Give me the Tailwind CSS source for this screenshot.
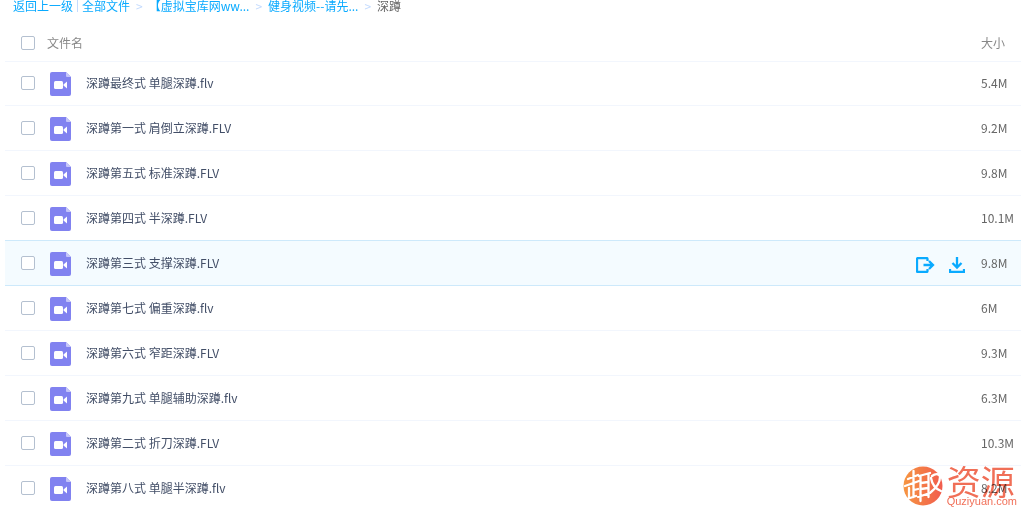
<!DOCTYPE html>
<html lang="zh-CN">
<head>
  <meta charset="UTF-8" />
  <meta name="viewport" content="width=device-width, initial-scale=1.0"/>
  <title>深蹲</title>
  <script src="https://cdn.jsdelivr.net/npm/@tailwindcss/browser@4"></script>
</head>
<body class="bg-white font-['Noto_Sans_CJK_SC',sans-serif] text-xs text-[#424e67]">
  <div class="relative h-screen overflow-hidden">
    <nav class="flex h-3 items-center pl-[13px] leading-3 text-[#09aaff] whitespace-nowrap">
      <a href="#">返回上一级</a>
      <span class="mx-1 h-3 w-px bg-[#c4dbfe]"></span>
      <a href="#">全部文件</a>
      <span class="mx-1.5 text-[#c4dbfe]">&gt;</span>
      <a href="#">【虚拟宝库网ww...</a>
      <span class="mx-1.5 text-[#c4dbfe]">&gt;</span>
      <a href="#">健身视频--请先...</a>
      <span class="mx-1.5 text-[#c4dbfe]">&gt;</span>
      <span class="text-[#666]">深蹲</span>
    </nav>

    <div class="mt-3 pl-[5px]">
      <table class="w-full table-fixed border-collapse">
        <thead>
          <tr class="h-[37px] border-b border-[#f2f6fd] text-left text-[#888]">
            <th class="w-[42px] pt-0.5 pl-4">
              <input type="checkbox" aria-label="全选" class="block size-3.5 appearance-none rounded-xs border border-[#b4c0d0] bg-white" />
            </th>
            <th class="pt-0.5 font-normal">文件名</th>
            <th class="w-[66px]"></th>
            <th class="w-10 pt-0.5 font-normal">大小</th>
          </tr>
        </thead>
        <tbody id="fileList"></tbody>
      </table>
    </div>

    <div class="pointer-events-none absolute right-1 bottom-0.5 flex items-center gap-1 opacity-90 mix-blend-multiply">
      <svg class="size-10" viewBox="0 0 40 40">
        <defs>
          <linearGradient id="badge" x1="0" y1="0" x2="1" y2="0">
            <stop offset="0" stop-color="#f58a2c" />
            <stop offset="1" stop-color="#f04a3a" />
          </linearGradient>
        </defs>
        <circle cx="20" cy="20" r="19.5" fill="url(#badge)" />
        <g fill="none" stroke="#fff" stroke-width="2.3" stroke-linecap="round" stroke-linejoin="round">
          <path d="M5 13l10-4M10.500 5v12M2 20l14-5M10.500 18v13M6 22v10M11 24l4-1M4 33l9-3" />
          <path d="M16 10l11-3M17.500 10v25M25.500 8v23M18 17l7-1M18 23l7-1M15 31l12-4" />
          <path d="M29 10c4-3 8-2 8 1 0 5-4 11-9 15M28 12c1 6 5 11 10 13" />
        </g>
      </svg>
      <div class="text-[#ef5f45]">
        <div class="text-[34px] leading-[30px]">资源</div>
        <div class="font-['Liberation_Sans',sans-serif] text-[11px] leading-[10px]">Quziyuan.com</div>
      </div>
    </div>
  </div>

  <script>
    const files = [
      { name: "深蹲最终式 单腿深蹲.flv", size: "5.4M" },
      { name: "深蹲第一式 肩倒立深蹲.FLV", size: "9.2M" },
      { name: "深蹲第五式 标准深蹲.FLV", size: "9.8M" },
      { name: "深蹲第四式 半深蹲.FLV", size: "10.1M" },
      { name: "深蹲第三式 支撑深蹲.FLV", size: "9.8M", active: true },
      { name: "深蹲第七式 偏重深蹲.flv", size: "6M" },
      { name: "深蹲第六式 窄距深蹲.FLV", size: "9.3M" },
      { name: "深蹲第九式 单腿辅助深蹲.flv", size: "6.3M" },
      { name: "深蹲第二式 折刀深蹲.FLV", size: "10.3M" },
      { name: "深蹲第八式 单腿半深蹲.flv", size: "8.2M" }
    ];

    const videoIcon = `
      <svg class="mt-0.5 h-6 w-[21px] shrink-0" viewBox="0 0 21 24">
        <path d="M2 0h14l5 5v17a2 2 0 0 1-2 2H2a2 2 0 0 1-2-2V2a2 2 0 0 1 2-2z" fill="#8182f0" />
        <path d="M16 0l5 5h-4a1 1 0 0 1-1-1z" fill="#c5c6fa" />
        <rect x="4" y="9" width="9" height="8" rx="1.5" fill="#fff" />
        <path d="M13.500 12.500L17 9.500v7l-3.500-3z" fill="#fff" />
      </svg>`;

    const actions = `
      <div class="flex items-center gap-3.5 pt-1 pl-px text-[#09aaff]">
        <button aria-label="分享" class="block">
          <svg class="h-4 w-[19px]" viewBox="0 0 19 16" fill="none" stroke="currentColor" stroke-width="2.3">
            <path d="M11.500 4V2a1 1 0 0 0-1-1H2a1 1 0 0 0-1 1v12a1 1 0 0 0 1 1h8.500a1 1 0 0 0 1-1v-2M7.500 8h9M13 4l4 4-4 4" />
          </svg>
        </button>
        <button aria-label="下载" class="block">
          <svg class="size-4" viewBox="0 0 16 16" fill="none" stroke="currentColor" stroke-width="2.3">
            <path d="M8 0v10.500M3.500 6L8 10.500 12.500 6M1 12v3h14v-3" />
          </svg>
        </button>
      </div>`;

    const list = document.getElementById("fileList");
    files.forEach((file, index) => {
      const next = files[index + 1];
      const tr = document.createElement("tr");
      tr.className = index === 0 ? "h-11 border-b" : "h-[45px] border-b";
      // the line above the active row belongs to the row before it
      tr.className += file.active || (next && next.active) ? " border-[#cde9fb]" : " border-[#f2f6fd]";
      if (file.active) {
        tr.className += " bg-[#f4fbff]";
      }
      tr.innerHTML = `
        <td class="pl-4">
          <input id="file${index}" type="checkbox" class="block size-3.5 appearance-none rounded-xs border border-[#b4c0d0] bg-white" />
        </td>
        <td class="pl-[3px]">
          <label for="file${index}" class="flex items-center gap-[15px]">${videoIcon}<span>${file.name}</span></label>
        </td>
        <td>${file.active ? actions : ""}</td>
        <td class="text-[#666]">${file.size}</td>`;
      list.appendChild(tr);
    });
  </script>
</body>
</html>
